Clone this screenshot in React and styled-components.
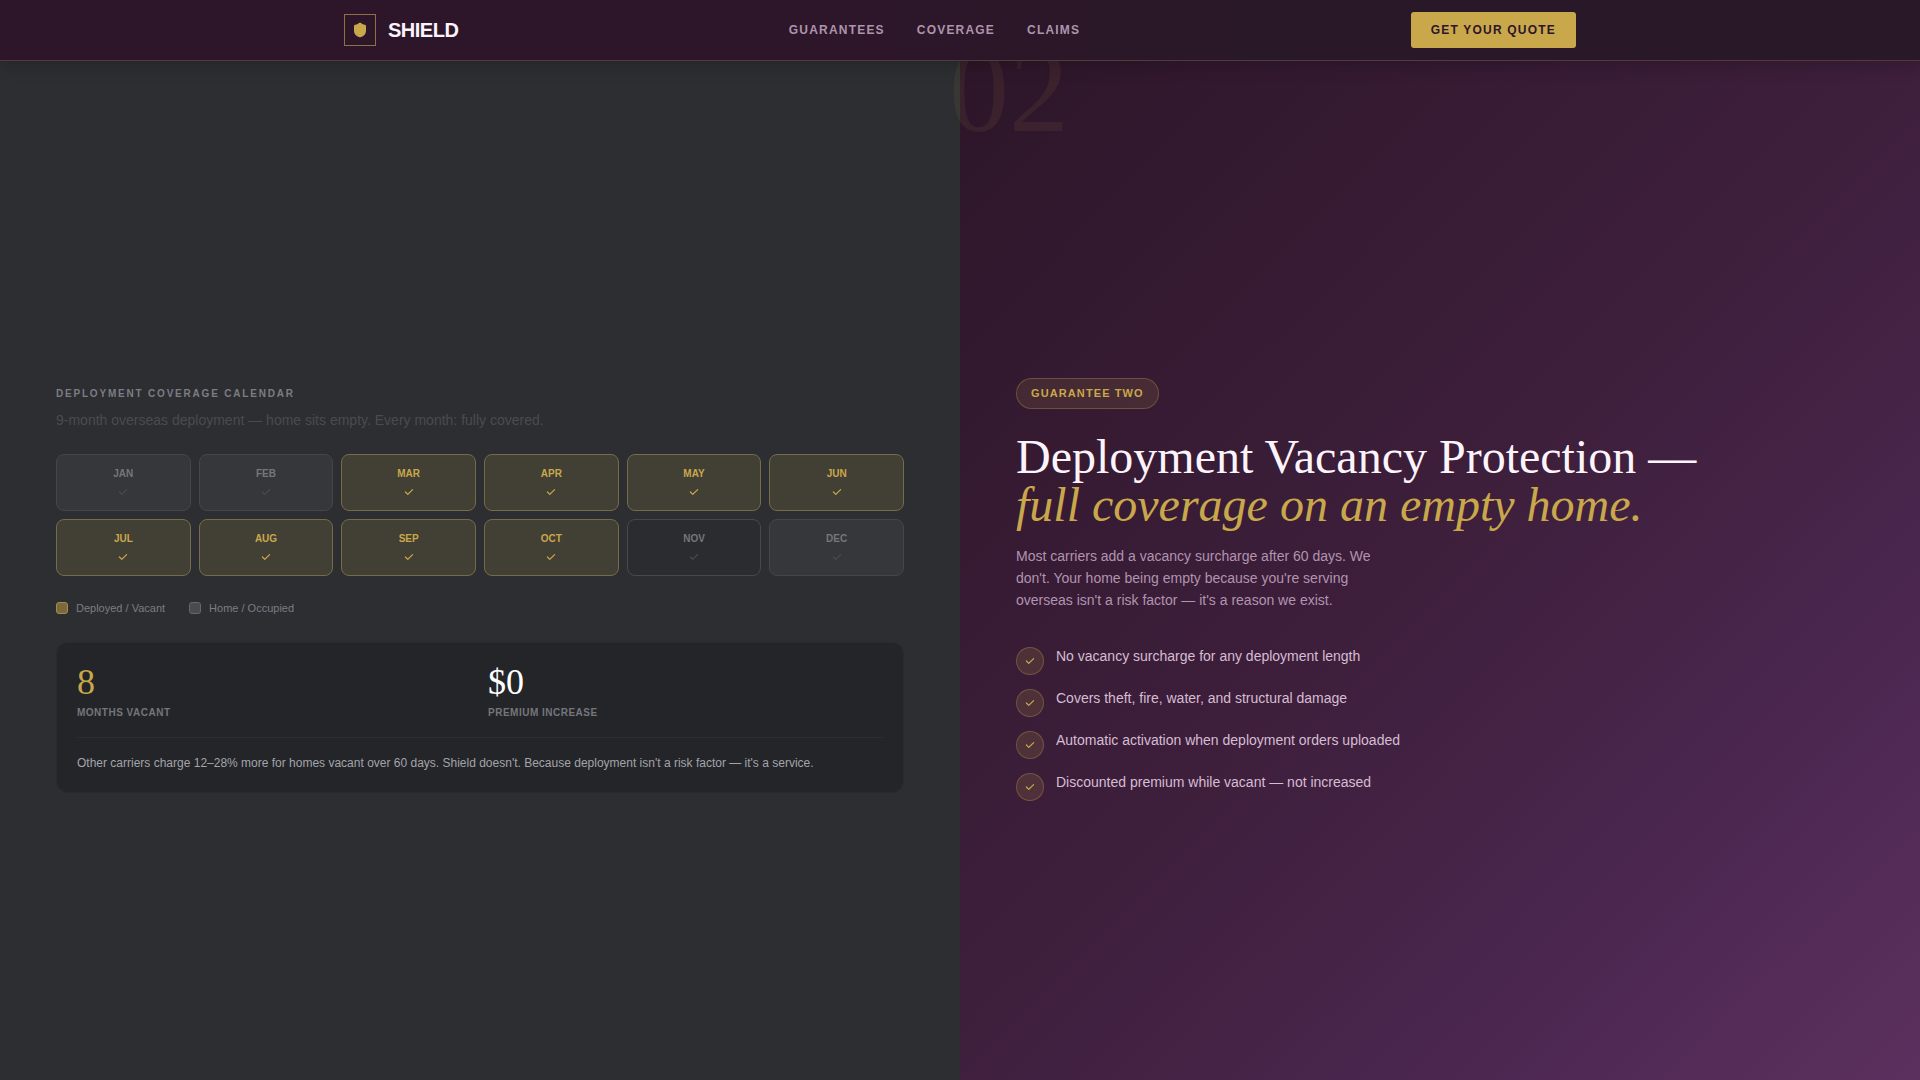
import React from 'react';
import styled, { createGlobalStyle } from 'styled-components';
import { Shield } from 'lucide-react';

const GlobalStyle = createGlobalStyle`
  *, *:before {
    box-sizing: border-box;
  }

  body {
    background-color: #2c2e31;
    font-family: 'Liberation Sans', Arial, sans-serif;
    margin: 0;
  }

  h2, p, ul, dl, dd {
    margin: 0;
    padding: 0;
  }
`

const Page = styled.div`
  display: flex;
  flex-direction: column;
  min-height: 100vh;
`

const Header = styled.header`
  background: linear-gradient(90deg, #2d162a 0%, #2d162a 45%, #291827 65%, #291827 100%);
  border-bottom: 1px solid #523a40;
  box-shadow: 0 4px 16px rgba(0, 0, 0, 0.2);
  position: sticky;
  top: 0;
  z-index: 1;
`

const HeaderInner = styled.div`
  align-items: center;
  display: flex;
  justify-content: space-between;
  margin: 0 auto;
  max-width: 1280px;
  padding: 12px 24px;
`

const Logo = styled.a`
  align-items: center;
  color: #fdf4fb;
  display: flex;
  font-size: 20px;
  font-weight: bold;
  gap: 12px;
  letter-spacing: -0.5px;
  text-decoration: none;
`

const LogoMark = styled.span`
  align-items: center;
  border: 1px solid #8f7141;
  color: #c9a84c;
  display: flex;
  height: 32px;
  justify-content: center;
  width: 32px;
`

const Nav = styled.nav`
  display: flex;
  gap: 32px;
`

const NavLink = styled.a`
  color: #ae94ac;
  font-size: 12px;
  font-weight: bold;
  letter-spacing: 0.1em;
  text-decoration: none;
  text-transform: uppercase;
`

const QuoteButton = styled.button`
  background-color: #c9a84c;
  border: none;
  border-radius: 3px;
  color: #2d1529;
  cursor: pointer;
  font-family: inherit;
  font-size: 12px;
  font-weight: bold;
  height: 36px;
  letter-spacing: 0.1em;
  padding: 0 20px;
  text-transform: uppercase;
`

const Split = styled.main`
  display: grid;
  flex-grow: 1;
  grid-template-columns: 1fr 1fr;
`

const Panel = styled.section`
  background: ${props => props.$plum
    ? 'linear-gradient(135deg, #2d1629 0%, #3e1f3c 50%, #4b2750 76%, #5c305e 100%)'
    : '#2c2e31'};
  display: flex;
  flex-direction: column;
  justify-content: center;
  padding: 94px 56px 56px;
  position: relative;
`

const Eyebrow = styled.h2`
  color: #7c7d84;
  font-size: 10px;
  font-weight: bold;
  letter-spacing: 0.18em;
  line-height: 16px;
  text-transform: uppercase;
`

const Lead = styled.p`
  color: #4a4b51;
  font-size: 14px;
  line-height: 20px;
  margin: 8px 0 24px;
`

const MonthGrid = styled.ul`
  display: grid;
  gap: 8px;
  grid-template-columns: repeat(6, 1fr);
  list-style: none;
`

const monthFill = {
  away: '#423f34',
  home: '#36373b',
  ending: '#2b2c30'
}

const monthBorder = {
  away: '#766c49',
  home: '#45464b',
  ending: '#484946'
}

const Month = styled.li`
  align-items: center;
  background-color: ${props => monthFill[props.$status]};
  border: 1px solid ${props => monthBorder[props.$status]};
  border-radius: 8px;
  color: ${props => props.$status === 'away' ? '#c9a84c' : '#75767c'};
  display: flex;
  flex-direction: column;
  font-size: 10px;
  font-weight: bold;
  gap: 5px;
  height: 57px;
  line-height: 14px;
  padding-top: 12px;

  & svg {
    color: ${props => props.$status === 'away' ? '#c9a84c' : '#494a50'};
  }
`

const Legend = styled.ul`
  color: #7c7d84;
  display: flex;
  font-size: 11px;
  gap: 24px;
  line-height: 16px;
  list-style: none;
  margin: 24px 0 26px;
`

const LegendItem = styled.li`
  align-items: center;
  display: flex;
  gap: 8px;

  &:before {
    background-color: ${props => props.$away ? '#7b693e' : '#4a4b50'};
    border: 1px solid ${props => props.$away ? '#a68c45' : '#66676d'};
    border-radius: 3px;
    content: '';
    height: 12px;
    width: 12px;
  }
`

const Summary = styled.div`
  background-color: #242529;
  border: 1px solid #292a2e;
  border-radius: 12px;
  padding: 20px;
`

const Stats = styled.dl`
  border-bottom: 1px solid #2d2e32;
  display: grid;
  gap: 16px;
  grid-template-columns: 1fr 1fr;
  padding-bottom: 16px;
`

const Stat = styled.div`
  display: flex;
  flex-direction: column-reverse;
  gap: 4px;
`

const StatLabel = styled.dt`
  color: #75767c;
  font-size: 10px;
  font-weight: bold;
  letter-spacing: 0.05em;
  line-height: 16px;
  text-transform: uppercase;
`

const StatValue = styled.dd`
  color: ${props => props.$gold ? '#c9a84c' : '#ffffff'};
  font-family: 'Liberation Serif', 'Times New Roman', serif;
  font-size: 36px;
  line-height: 38px;
`

const Note = styled.p`
  color: #a3a4a9;
  font-size: 12px;
  line-height: 18px;
  padding-top: 16px;
`

const Numeral = styled.span`
  color: rgba(201, 168, 76, 0.08);
  font-family: 'Liberation Serif', 'Times New Roman', serif;
  font-size: 120px;
  left: -11px;
  line-height: 120px;
  position: absolute;
  top: -30px;
`

const Pill = styled.span`
  align-self: flex-start;
  background-color: rgba(201, 168, 76, 0.12);
  border: 1px solid rgba(201, 168, 76, 0.3);
  border-radius: 16px;
  color: #c9a84c;
  font-size: 11px;
  font-weight: bold;
  letter-spacing: 0.1em;
  line-height: 17px;
  padding: 6px 14px;
  text-transform: uppercase;
`

const Title = styled.h2`
  color: #fdf4fb;
  font-family: 'Liberation Serif', 'Times New Roman', serif;
  font-size: 48px;
  font-weight: normal;
  line-height: 48px;
  margin: 24px 0 16px;

  & em {
    color: #c9a84c;
    display: block;
  }
`

const Copy = styled.p`
  color: #b194b0;
  font-size: 14px;
  line-height: 22px;
  max-width: 380px;
`

const Benefits = styled.ul`
  display: flex;
  flex-direction: column;
  gap: 12px;
  list-style: none;
  margin-top: 34px;
`

const Benefit = styled.li`
  color: #d5bdd3;
  display: flex;
  font-size: 14px;
  gap: 12px;
  line-height: 22px;
`

const Badge = styled.span`
  align-items: center;
  background-color: rgba(201, 168, 76, 0.15);
  border: 1px solid rgba(201, 168, 76, 0.3);
  border-radius: 50%;
  color: #c9a84c;
  display: flex;
  height: 28px;
  justify-content: center;
  margin-top: 2px;
  width: 28px;
`

const months = [
  { name: 'JAN', status: 'home' },
  { name: 'FEB', status: 'home' },
  { name: 'MAR', status: 'away' },
  { name: 'APR', status: 'away' },
  { name: 'MAY', status: 'away' },
  { name: 'JUN', status: 'away' },
  { name: 'JUL', status: 'away' },
  { name: 'AUG', status: 'away' },
  { name: 'SEP', status: 'away' },
  { name: 'OCT', status: 'away' },
  { name: 'NOV', status: 'ending' },
  { name: 'DEC', status: 'home' }
]

const benefits = [
  'No vacancy surcharge for any deployment length',
  'Covers theft, fire, water, and structural damage',
  'Automatic activation when deployment orders uploaded',
  'Discounted premium while vacant — not increased'
]

const Check = () => (
  <svg width="12" height="12" viewBox="0 0 20 20" fill="currentColor" aria-hidden="true">
    <path
      fillRule="evenodd"
      clipRule="evenodd"
      d="M16.707 5.293a1 1 0 010 1.414l-8 8a1 1 0 01-1.414 0l-4-4a1 1 0 011.414-1.414L8 12.586l7.293-7.293a1 1 0 011.414 0z"
    />
  </svg>
)

const App = () => (
  <Page>
    <GlobalStyle />
    <Header>
      <HeaderInner>
        <Logo href="#top">
          <LogoMark><Shield size={16} fill="currentColor" aria-hidden="true" /></LogoMark>
          SHIELD
        </Logo>
        <Nav>
          <NavLink href="#guarantees">Guarantees</NavLink>
          <NavLink href="#coverage">Coverage</NavLink>
          <NavLink href="#claims">Claims</NavLink>
        </Nav>
        <QuoteButton type="button">Get your quote</QuoteButton>
      </HeaderInner>
    </Header>
    <Split>
      <Panel>
        <Eyebrow>Deployment coverage calendar</Eyebrow>
        <Lead>9-month overseas deployment — home sits empty. Every month: fully covered.</Lead>
        <MonthGrid>
          {months.map(month => (
            <Month key={month.name} $status={month.status}>
              {month.name}
              <Check />
            </Month>
          ))}
        </MonthGrid>
        <Legend>
          <LegendItem $away>Deployed / Vacant</LegendItem>
          <LegendItem>Home / Occupied</LegendItem>
        </Legend>
        <Summary>
          <Stats>
            <Stat>
              <StatLabel>Months vacant</StatLabel>
              <StatValue $gold>8</StatValue>
            </Stat>
            <Stat>
              <StatLabel>Premium increase</StatLabel>
              <StatValue>$0</StatValue>
            </Stat>
          </Stats>
          <Note>Other carriers charge 12–28% more for homes vacant over 60 days. Shield doesn't. Because deployment isn't a risk factor — it's a service.</Note>
        </Summary>
      </Panel>
      <Panel $plum>
        <Numeral aria-hidden="true">02</Numeral>
        <Pill>Guarantee two</Pill>
        <Title>Deployment Vacancy Protection — <em>full coverage on an empty home.</em></Title>
        <Copy>Most carriers add a vacancy surcharge after 60 days. We don't. Your home being empty because you're serving overseas isn't a risk factor — it's a reason we exist.</Copy>
        <Benefits>
          {benefits.map(benefit => (
            <Benefit key={benefit}>
              <Badge><Check /></Badge>
              {benefit}
            </Benefit>
          ))}
        </Benefits>
      </Panel>
    </Split>
  </Page>
)

export default App
